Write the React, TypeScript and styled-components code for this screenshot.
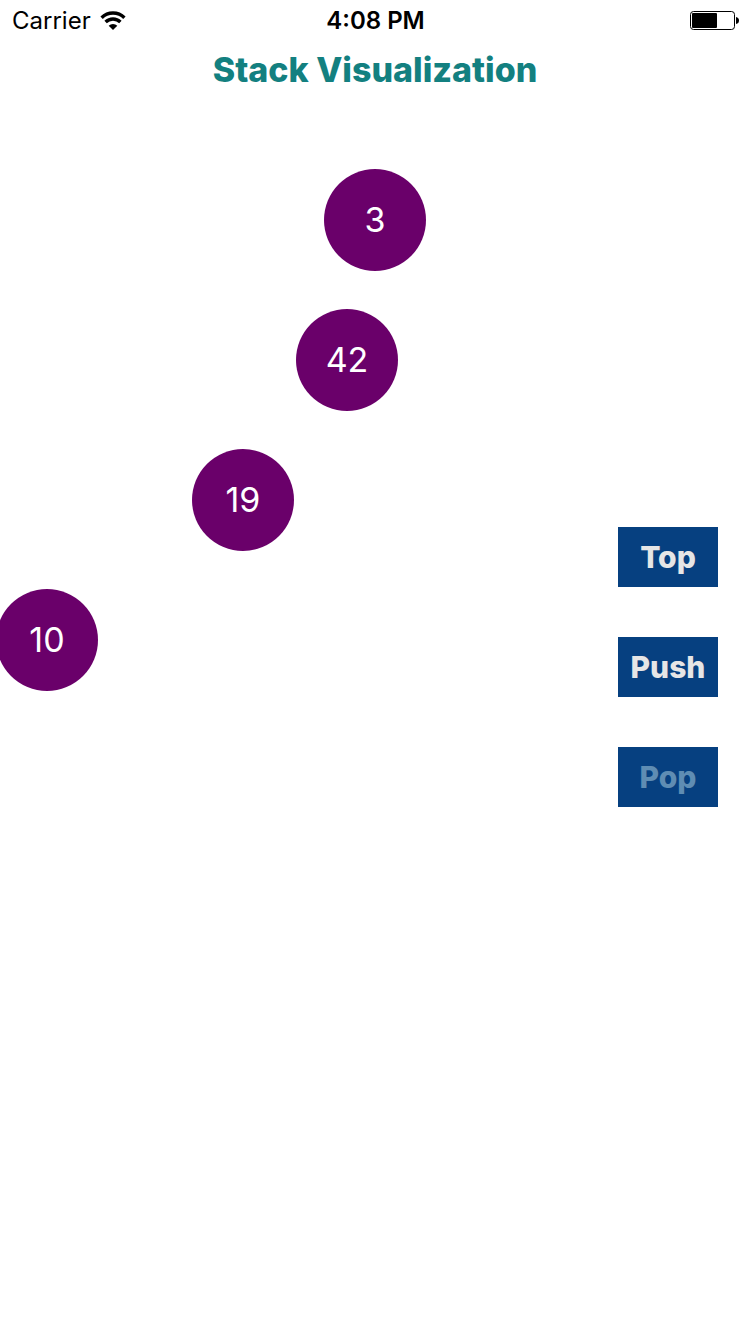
import React from 'react';
import styled, { createGlobalStyle } from 'styled-components';

const GlobalStyle = createGlobalStyle`
  *, *::before, *::after { box-sizing: border-box; }
  body {
    margin: 0;
    background: #ffffff;
    font-family: Inter, "Liberation Sans", sans-serif;
  }
`;

const Screen = styled.div`
  display: grid;
  min-height: 100vh;
  overflow: hidden;
`;

const Content = styled.div`
  grid-area: 1 / 1;
  display: flex;
  flex-direction: column;
`;

const StatusBar = styled.header`
  display: grid;
  grid-template-columns: 1fr auto 1fr;
  align-items: center;
  height: 42px;
  padding: 0 11px 0 12px;
  font-size: 24px;
  line-height: 42px;
  color: #000000;

  svg {
    display: block;
    margin-bottom: 2px;
  }
`;

const Network = styled.div`
  display: flex;
  align-items: center;
  gap: 9px;
`;

const Clock = styled.time`
  font-weight: 600;
`;

const Battery = styled.div`
  display: flex;
  justify-content: flex-end;
`;

const Title = styled.h1`
  margin: 0;
  padding-top: 6px;
  text-align: center;
  font-size: 34px;
  line-height: 44px;
  font-weight: 800;
  color: #138080;
`;

const Canvas = styled.main`
  position: relative;
  flex: 1;
  margin-top: 77px;
  min-height: 540px;
`;

const Node = styled.div<{ $shift: number; $level: number }>`
  position: absolute;
  top: ${({ $level }) => $level * 140}px;
  left: calc(50% - 51px + ${({ $shift }) => $shift}px);
  display: flex;
  align-items: center;
  justify-content: center;
  width: 102px;
  height: 102px;
  border-radius: 50%;
  background: #6a006a;
  color: #ffffff;
  font-size: 34px;
  line-height: 44px;
  font-weight: 400;
`;

const Controls = styled.nav`
  grid-area: 1 / 1;
  align-self: center;
  justify-self: end;
  display: flex;
  flex-direction: column;
  gap: 50px;
  margin-right: 32px;
  z-index: 1;
`;

const ActionButton = styled.button<{ $dimmed?: boolean }>`
  display: flex;
  align-items: center;
  justify-content: center;
  width: 100px;
  height: 60px;
  padding: 0;
  border: 0;
  background: #064080;
  color: ${({ $dimmed }) => ($dimmed ? '#5f8db3' : '#e6e6e6')};
  font-family: inherit;
  font-size: 30px;
  line-height: 36px;
  font-weight: 800;

  &:active {
    color: #5f8db3;
  }
`;

const nodes = [
  { value: 3, shift: 0 },
  { value: 42, shift: -28 },
  { value: 19, shift: -132 },
  { value: 10, shift: -328 },
];

const WifiIcon = () => (
  <svg width="26" height="20" viewBox="0 -1 26 20" role="img" aria-label="Wi-Fi">
    <g fill="none" stroke="#000" strokeWidth="3.4">
      <path d="M1.6 6.7A16.2 16.2 0 0 1 24.4 6.7" />
      <path d="M5.6 11A10.5 10.5 0 0 1 20.4 11" />
    </g>
    <path d="M13 19L8.7 14.7A6 6 0 0 1 17.3 14.7Z" fill="#000" />
  </svg>
);

const BatteryIcon = () => (
  <svg width="49" height="19" viewBox="0 0 49 19" role="img" aria-label="Battery">
    <rect x="0.5" y="0.5" width="44" height="18" rx="3" fill="none" stroke="#000" />
    <rect x="2" y="2" width="25" height="15" rx="1" fill="#000" />
    <path d="M46 6Q49 6.5 49 9.5Q49 12.5 46 13Z" fill="#000" />
  </svg>
);

export default function App() {
  return (
    <>
      <GlobalStyle />
      <Screen>
        <Content>
          <StatusBar>
            <Network>
              <span>Carrier</span>
              <WifiIcon />
            </Network>
            <Clock>4:08 PM</Clock>
            <Battery>
              <BatteryIcon />
            </Battery>
          </StatusBar>
          <Title>Stack Visualization</Title>
          <Canvas>
            {nodes.map(({ value, shift }, level) => (
              <Node key={value} $shift={shift} $level={level}>
                {value}
              </Node>
            ))}
          </Canvas>
        </Content>
        <Controls aria-label="Stack operations">
          <ActionButton type="button">Top</ActionButton>
          <ActionButton type="button">Push</ActionButton>
          <ActionButton type="button" $dimmed>
            Pop
          </ActionButton>
        </Controls>
      </Screen>
    </>
  );
}
